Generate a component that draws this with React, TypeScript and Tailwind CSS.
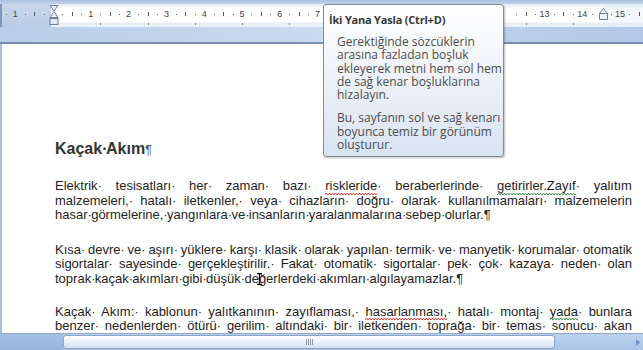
import React from 'react'

const X0 = 53
const CM = 37.8

const RED = ['riskleride', 'hasarlanması,']
const GREEN = ['getirirler.Zayıf', 'yada']

// zigzag used for the spelling / grammar marks
const ZIG = 'M0 3' + ' l1.5 -2 l1.5 2'.repeat(60)

// hidden under the tooltip
const covered = (x: number) => x > 318 && x < 508

// a space with formatting marks on: the dot sits at the start of the space
const Dot = () => <span className="inline-block w-0 overflow-visible">·</span>

const Caret = () => (
  <span className="relative inline-block w-0 align-baseline">
    <svg className="absolute -left-[2px] -top-[10px]" width="5" height="12" viewBox="0 0 5 12">
      <path d="M0 0.5h5M0 11.5h5M2.5 0.5v11" stroke="#000" strokeWidth="1.3" fill="none" />
    </svg>
  </span>
)

// inline-block so the mark follows the word after justification
const Wavy = ({ w, color }: { w: string; color: string }) => (
  <span className="relative inline-block">
    {w}
    <svg className="absolute left-0 top-full -mt-[2px] h-[4px] w-full overflow-hidden">
      <path d={ZIG} stroke={color} strokeWidth="0.9" fill="none" />
    </svg>
  </span>
)

const Word = ({ w }: { w: string }) => {
  if (w.includes('|')) {
    const [a, b] = w.split('|')
    return (
      <span>
        {a}
        <Caret />
        {b}
      </span>
    )
  }
  if (RED.includes(w)) return <Wavy w={w} color="#e0302a" />
  if (GREEN.includes(w)) return <Wavy w={w} color="#3a8a45" />
  return <span>{w}</span>
}

const Line = ({ text, last = false }: { text: string; last?: boolean }) => {
  const words = text.split(' ')
  return (
    <div className={last ? 'text-left' : 'text-justify [text-align-last:justify]'}>
      {words.map((w, i) => (
        <React.Fragment key={i}>
          <Word w={w} />
          {i < words.length - 1 && (
            <>
              <Dot />{' '}
            </>
          )}
        </React.Fragment>
      ))}
      {last && <span>¶</span>}
    </div>
  )
}

const paragraphs = [
  [
    'Elektrik tesisatları her zaman bazı riskleride beraberlerinde getirirler.Zayıf yalıtım',
    'malzemeleri, hatalı iletkenler, veya cihazların doğru olarak kullanılmamaları malzemelerin',
    'hasar görmelerine, yangınlara ve insanların yaralanmalarına sebep olurlar.',
  ],
  [
    'Kısa devre ve aşırı yüklere karşı klasik olarak yapılan termik ve manyetik korumalar otomatik',
    'sigortalar sayesinde gerçekleştirilir. Fakat otomatik sigortalar pek çok kazaya neden olan',
    'toprak kaçak akımları gibi düşük de|ğerlerdeki akımları algılayamazlar.',
  ],
  [
    'Kaçak Akım: kablonun yalıtkanının zayıflaması, hasarlanması, hatalı montaj yada bunlara',
    'benzer nedenlerden ötürü gerilim altındaki bir iletkenden toprağa bir temas sonucu akan',
    'bir akımdır.',
  ],
]

const Ruler = () => {
  const nums = [-1, 1, 2, 3, 4, 5, 6, 7, 8, 9, 10, 11, 12, 13, 14, 15].filter((n) => !covered(X0 + n * CM))
  const ticks: { x: number; bar: boolean }[] = []
  for (let n = -2; n < 16; n++) {
    for (let q = 1; q < 4; q++) {
      const x = X0 + (n + q / 4) * CM
      if (x > 3 && x < 643 && !covered(x)) ticks.push({ x, bar: q === 2 })
    }
  }
  const tabs = Array.from({ length: 11 }, (_, k) => X0 + (k + 1) * 47.25).filter((x) => !covered(x))

  return (
    <div className="relative h-[44px] bg-[#b4c8e4]">
      <div className="h-[4px] bg-[linear-gradient(to_bottom,#a9c0e1,#c3d4ec)]" />
      <div className="relative flex h-[23px] border-l-2 border-[#7d97bf]">
        <div className="w-[49px] bg-[linear-gradient(to_bottom,#c9d7ea,#b9cbe4)]" />
        <div className="flex-1 bg-[linear-gradient(to_bottom,#e4ecf7_0,#ffffff_5px,#ffffff_18px,#e6edf6_19px,#eef2f8_23px)]" />
        <div className="w-[40px] bg-[linear-gradient(to_bottom,#e4ecf7_0,#f6f8fb_5px,#f6f8fb_18px,#e6edf6_19px)]" />
        <div className="pointer-events-none absolute inset-0 -left-[2px] font-['Liberation_Sans',Arial,sans-serif] text-[9px] text-[#444]">
          {nums.map((n) => (
            <span
              key={n}
              className="absolute top-[5px] -translate-x-1/2 leading-[11px]"
              style={{ left: X0 + n * CM }}
            >
              {Math.abs(n)}
            </span>
          ))}
          {ticks.map((t, i) =>
            t.bar ? (
              <span key={i} className="absolute top-[8px] h-[4px] w-px bg-[#555]" style={{ left: Math.round(t.x) }} />
            ) : (
              <span key={i} className="absolute top-[10px] h-px w-px bg-[#666]" style={{ left: Math.round(t.x) }} />
            )
          )}
          {tabs.map((x, i) => (
            <span key={i} className="absolute top-[19px] h-[2px] w-px bg-[#8c8c8c]" style={{ left: Math.round(x) }} />
          ))}
        </div>
        {/* indent markers */}
        <svg className="absolute left-[47px] top-[1px]" width="10" height="23" viewBox="0 0 10 23">
          <path d="M1 0.5h8L5 6z" fill="#eef2f8" stroke="#6c7f9c" />
          <path d="M5 6.5L9 12.5H1z" fill="#eef2f8" stroke="#6c7f9c" />
          <rect x="1" y="13.5" width="8" height="6" fill="#e3e9f2" stroke="#6c7f9c" />
        </svg>
        <svg className="absolute left-[597px] top-[4px]" width="9" height="12" viewBox="0 0 9 12">
          <path d="M4.5 0.5L8.5 5.5V11.5H0.5V5.5z" fill="#eef2f8" stroke="#6c7f9c" />
          <path d="M0.5 5.5h8" stroke="#6c7f9c" />
        </svg>
      </div>
      <div className="h-[15px] bg-[linear-gradient(100deg,#b9cde8_0%,#c8d8ee_45%,#d3e0f1_70%,#bcd0ea_75%,#b3c8e6_100%)]" />
      <div className="h-[2px] bg-[#7a8fb0]" />
    </div>
  )
}

const Scrollbar = () => (
  <div className="flex h-[17px] border-t border-[#8ea9d1] bg-[linear-gradient(to_bottom,#bcd1ee,#a9c3e7)]">
    <div className="w-[63px] bg-[linear-gradient(to_bottom,#a7c0e5,#94b2de)]" />
    <div className="mt-[1px] flex h-[14px] w-[492px] items-center justify-center rounded-[3px] border border-[#8ea4c6] bg-[linear-gradient(to_bottom,#ffffff,#edf2f9_45%,#d2dff0)]">
      <div className="flex gap-[1px]">
        <span className="h-[6px] w-px bg-[#8f9db4]" />
        <span className="h-[6px] w-px bg-[#8f9db4]" />
        <span className="h-[6px] w-px bg-[#8f9db4]" />
        <span className="h-[6px] w-px bg-[#8f9db4]" />
      </div>
    </div>
    <div className="flex flex-1 items-center justify-end pr-[3px]">
      <svg width="4" height="7" viewBox="0 0 4 7">
        <path d="M0 0L4 3.5L0 7z" fill="#6f90c2" />
      </svg>
    </div>
  </div>
)

const Tooltip = () => (
  <div className="absolute left-[323px] top-[4px] h-[153px] w-[181px] rounded-[3px] border border-[#8a8a8a] bg-[linear-gradient(to_bottom,#ffffff,#f1f4f9_40%,#d9e3f1)] shadow-[1px_1px_2px_rgba(0,0,0,0.25)] font-['Open_Sans',sans-serif]">
    <div className="pl-[5px] pt-[8px] text-[11px] font-bold leading-[14px] tracking-[-0.2px] text-[#383838]">İki Yana Yasla (Ctrl+D)</div>
    <div className="mt-[8px] pl-[13px] text-[12px] leading-[13.3px] text-[#4d4d4d]">
      <div>Gerektiğinde sözcüklerin</div>
      <div>arasına fazladan boşluk</div>
      <div>ekleyerek metni hem sol hem</div>
      <div>de sağ kenar boşluklarına</div>
      <div>hizalayın.</div>
      <div className="mt-[10px]">Bu, sayfanın sol ve sağ kenarı</div>
      <div>boyunca temiz bir görünüm</div>
      <div>oluşturur.</div>
    </div>
  </div>
)

export default function App() {
  return (
    <div className="relative h-[350px] w-[643px] overflow-hidden bg-white font-['Liberation_Sans',Arial,sans-serif]">
      <Ruler />
      <div className="h-[289px] overflow-hidden border-l-2 border-[#a9bedc] bg-white pl-[53px] pr-[11px] pt-[96px] text-[#1e1e1e]">
        <h1 className="text-[16px] font-bold leading-[17px] text-[#333]">
          Kaçak<Dot /> Akım<span className="text-[12px] font-normal text-[#555]">¶</span>
        </h1>
        {paragraphs.map((p, i) => (
          <div key={i} className={`text-[13px] leading-[14.6px] ${i === 0 ? 'mt-[20px]' : i === 1 ? 'mt-[20px]' : 'mt-[18px]'}`}>
            {p.map((l, j) => (
              <Line key={j} text={l} last={j === p.length - 1} />
            ))}
          </div>
        ))}
      </div>
      <Scrollbar />
      <Tooltip />
    </div>
  )
}
